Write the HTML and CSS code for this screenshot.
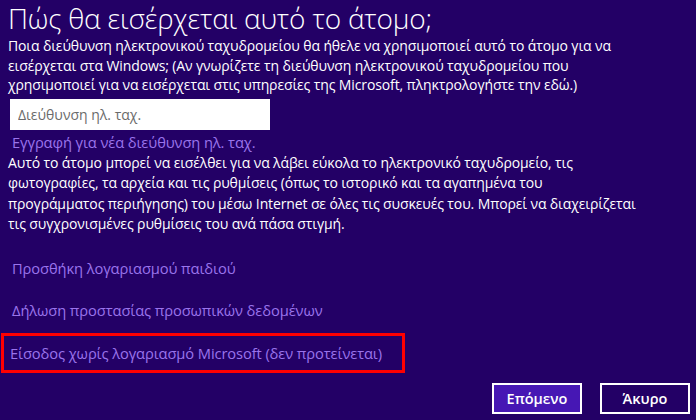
FILE: index.html
```html
<!DOCTYPE html>
<html lang="el">
<head>
	<meta charset="UTF-8">
	<title>Προσθήκη χρήστη</title>
	<link rel="stylesheet" href="styles.css">
</head>
<body>
	<div class="page">
		<h1 class="title">Πώς θα εισέρχεται αυτό το άτομο;</h1>
		<p class="intro">Ποια διεύθυνση ηλεκτρονικού ταχυδρομείου θα ήθελε να χρησιμοποιεί αυτό το άτομο για να<br>εισέρχεται στα Windows; (Αν γνωρίζετε τη διεύθυνση ηλεκτρονικού ταχυδρομείου που<br>χρησιμοποιεί για να εισέρχεται στις υπηρεσίες της Microsoft, πληκτρολογήστε την εδώ.)</p>
		<div class="field">
			<input type="text" placeholder="Διεύθυνση ηλ. ταχ.">
		</div>
		<a class="link signup" href="javascript:;">Εγγραφή για νέα διεύθυνση ηλ. ταχ.</a>
		<p class="info">Αυτό το άτομο μπορεί να εισέλθει για να λάβει εύκολα το ηλεκτρονικό ταχυδρομείο, τις<br>φωτογραφίες, τα αρχεία και τις ρυθμίσεις (όπως το ιστορικό και τα αγαπημένα του<br>προγράμματος περιήγησης) του μέσω Internet σε όλες τις συσκευές του. Μπορεί να διαχειρίζεται<br>τις συγχρονισμένες ρυθμίσεις του ανά πάσα στιγμή.</p>
		<ul class="links">
			<li><a class="link" href="javascript:;">Προσθήκη λογαριασμού παιδιού</a></li>
			<li><a class="link" href="javascript:;">Δήλωση προστασίας προσωπικών δεδομένων</a></li>
			<li class="marked"><a class="link" href="javascript:;">Είσοδος χωρίς λογαριασμό Microsoft (δεν προτείνεται)</a></li>
		</ul>
		<div class="actions">
			<button class="btn primary">Επόμενο</button>
			<button class="btn">Άκυρο</button>
		</div>
	</div>
</body>
</html>
```
FILE: styles.css
```css
*{
	margin:0;
	padding:0;
	box-sizing:border-box;
}
html,body{
	width:696px;
	height:420px;
	overflow:hidden;
	background:#230066;
}
body{
	font-family:"Open Sans","Noto Sans",sans-serif;
	color:#fff;
}
.page{
	padding:0 0 0 8px;
	display:flex;
	flex-direction:column;
	align-items:flex-start;
}
.title{
	font-size:28px;
	font-weight:300;
	line-height:36px;
	height:36px;
	letter-spacing:-0.2px;
}
.intro,
.info{
	font-size:14px;
	line-height:19.5px;
	letter-spacing:-0.12px;
	white-space:nowrap;
}
.info{
	line-height:20.6px;
}
.field{
	margin:4px 0 0 2px;
}
.field input{
	display:block;
	width:260px;
	height:31px;
	border:0;
	outline:0;
	background:#fff;
	padding:0 8px;
	font-family:inherit;
	font-size:14px;
	color:#333;
}
.field input::placeholder{
	color:#6b6b6b;
}
.link{
	color:#9a74ec;
	text-decoration:none;
	font-size:14.7px;
	letter-spacing:-0.1px;
}
.signup{
	display:block;
	margin:2px 0 0 4px;
	line-height:21px;
}
.links{
	list-style:none;
	margin-top:14px;
	margin-left:-8px;
}
.links li{
	width:404px;
	height:39px;
	display:flex;
	align-items:center;
	padding-left:9px;
	margin-bottom:3px;
	border:3px solid transparent;
}
.links li.marked{
	border-color:#f00;
	height:40px;
	margin-left:1px;
	padding-left:6px;
}
.actions{
	align-self:flex-end;
	display:flex;
	gap:18px;
	margin-top:7px;
	margin-right:6px;
}
.btn{
	width:90px;
	height:31px;
	border:2px solid #fff;
	background:#230066;
	color:#fff;
	font-family:inherit;
	font-size:14.5px;
	font-weight:600;
}
.btn.primary{
	background:#4617b4;
}
```
